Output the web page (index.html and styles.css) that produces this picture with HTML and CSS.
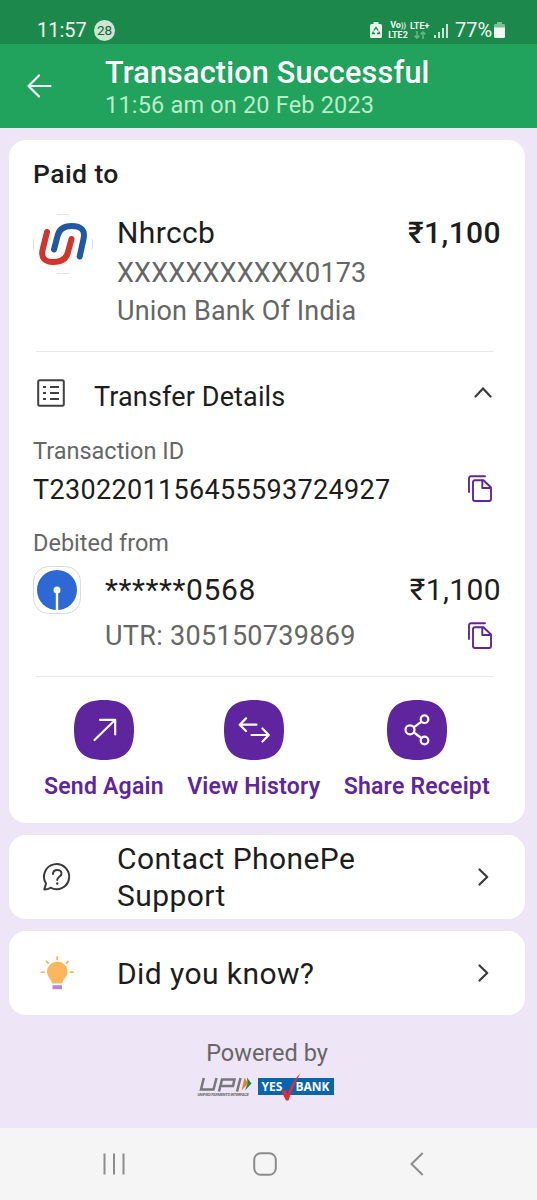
FILE: index.html
```html
<!DOCTYPE html>
<html lang="en">
<head>
<meta charset="utf-8">
<title>Transaction Successful</title>
<link rel="stylesheet" href="styles.css">
</head>
<body>
<div class="screen">
  <div class="status">
    <span class="clock">11:57</span>
    <span class="count">28</span>
    <svg class="status-recycle" width="12" height="16" viewBox="0 0 12 16"><path d="M3.500 0h5v2h2q1.500 0 1.500 1.500v11q0 1.500-1.500 1.500h-9Q0 16 0 14.500v-11Q0 2 1.500 2h2z" fill="#e6f5ea"/><path d="M3.900 8.500 6 5.400l2.100 3.100M8.800 9.500l.8 2H7M5 11.500H2.500l.9-2" fill="none" stroke="#1d884b" stroke-width="1.300"/></svg>
    <div class="volte"><span>Vo<i>))</i></span><span>LTE2</span></div>
    <div class="lte"><span>LTE+</span><svg width="12" height="8" viewBox="0 0 12 8" fill="none" stroke="#68b586" stroke-width="1.500"><path d="M3 0v7M.6 4.600 3 7l2.400-2.400M9 8V1M6.600 3.400 9 1l2.400 2.400"/></svg></div>
    <svg class="signal" width="14" height="15" viewBox="0 0 14 15" stroke="#e6f5ea" stroke-width="1.700"><path d="M1 15v-3M5 15V9M9 15V5M13 15V1"/></svg>
    <span class="percent">77%</span>
    <svg class="battery" width="11" height="16" viewBox="0 0 11 16"><path d="M3 0h5v2h2q1 0 1 1v3H0V3q0-1 1-1h2z" fill="#7cc096"/><path d="M0 5.500h11V14.500q0 1.500-1.500 1.500h-8Q0 16 0 14.500z" fill="#effaf1"/></svg>
  </div>
  <header class="header">
    <svg class="back" width="25" height="24" viewBox="0 0 25 24" fill="none" stroke="#fff" stroke-width="2.200" stroke-linecap="round" stroke-linejoin="round"><path d="M23.500 12H1.500M12 1.500 1.500 12 12 22.500"/></svg>
    <div>
      <h1 class="title">Transaction Successful</h1>
      <p class="subtitle">11:56 am on 20 Feb 2023</p>
    </div>
  </header>
  <main class="content">
    <section class="card receipt">
      <h2 class="paid">Paid to</h2>
      <div class="payee">
        <svg class="union" width="60" height="60" viewBox="0 0 60 60" fill="none" stroke-linecap="round"><path d="M24.500 .5q5.500-.7 11 0M24.500 59.500q5.500.7 11 0M.7 25q-.6 5 0 10M59.300 25q.6 5 0 10" stroke="#dce0e4" stroke-width="1"/><path d="M14 18 9.800 35C7.500 44 12 48 20 48c9 0 13.500-3.500 15-10l3.500-13" stroke="#d2342d" stroke-width="6"/><path d="M21 35.500 24.500 22C26 15.500 31 12 38.500 12c10 0 14 4.500 12 13l-3.800 17.500" stroke="#20599f" stroke-width="6"/></svg>
        <div class="payee-text">
          <p class="name">Nhrccb</p>
          <p class="acct">XXXXXXXXXXX0173</p>
          <p class="bank">Union Bank Of India</p>
        </div>
        <p class="amount strong">₹1,100</p>
      </div>
      <hr class="rule">
      <div class="details">
        <svg width="28" height="28" viewBox="0 0 28 28" fill="none" stroke="#414141" stroke-width="2"><rect x="1.200" y="1.200" width="25.600" height="25.600" rx="1.500"/><path d="M6 8h3M6 14h3M6 20h3M13 8h9M13 14h9M13 20h9"/></svg>
        <p class="details-title">Transfer Details</p>
        <svg class="chevron-up" width="18" height="12" viewBox="0 0 18 12" fill="none" stroke="#3b3b3b" stroke-width="2.200" stroke-linecap="round"><path d="M1.500 9.500 9 1.500l7.500 8"/></svg>
      </div>
      <p class="label">Transaction ID</p>
      <div class="line id-line">
        <p class="txn">T2302201156455593724927</p>
        <svg class="copy" width="25" height="28" viewBox="0 0 25 28"><path d="M2 17V3.300q0-2 2-2H18M8 5.300h8.500L24 12.500V24q0 2-2 2H8q-2 0-2-2V7.300q0-2 2-2zM15.300 5.500V13h8.500"/></svg>
      </div>
      <p class="label debited">Debited from</p>
      <div class="account">
        <svg class="sbi" width="48" height="48" viewBox="0 0 48 48"><rect x=".5" y=".5" width="47" height="47" rx="15" fill="#fff" stroke="#d9d9de"/><circle cx="24" cy="24" r="20" fill="#2e68d4"/><circle cx="24" cy="24" r="3.500" fill="#fff"/><path d="M24 24v21" stroke="#fff" stroke-width="2.400"/></svg>
        <div class="account-text">
          <div class="line"><p class="masked">******0568</p><p class="amount">₹1,100</p></div>
          <div class="line utr-line">
            <p class="utr">UTR: 305150739869</p>
            <svg class="copy" width="25" height="28" viewBox="0 0 25 28"><path d="M2 17V3.300q0-2 2-2H18M8 5.300h8.500L24 12.500V24q0 2-2 2H8q-2 0-2-2V7.300q0-2 2-2zM15.300 5.500V13h8.500"/></svg>
          </div>
        </div>
      </div>
      <hr class="rule">
      <div class="actions">
        <div class="action send">
          <svg width="60" height="60" viewBox="0 0 60 60"><path class="tile" d="M30 0C50 0 60 8 60 30S50 60 30 60 0 52 0 30 10 0 30 0z"/><path class="glyph" d="M20.500 40 41 20M26 19.800h15.200V34.500"/></svg>
          <span>Send Again</span>
        </div>
        <div class="action history">
          <svg width="60" height="60" viewBox="0 0 60 60"><path class="tile" d="M30 0C50 0 60 8 60 30S50 60 30 60 0 52 0 30 10 0 30 0z"/><path class="glyph" d="M32.500 24.700H16M22 18.400 15.700 24.700 22 31M27.500 35H44.500M38.500 28.500l6.300 6.500-6.300 6.500"/></svg>
          <span>View History</span>
        </div>
        <div class="action share">
          <svg width="60" height="60" viewBox="0 0 60 60"><path class="tile" d="M30 0C50 0 60 8 60 30S50 60 30 60 0 52 0 30 10 0 30 0z"/><g class="glyph"><circle cx="23" cy="29.800" r="4.500"/><circle cx="37.500" cy="19.200" r="3.800"/><circle cx="37.500" cy="40.500" r="3.800"/><path d="m27 27.100 7.300-5.300M27 32.500l7.300 5.500"/></g></svg>
          <span>Share Receipt</span>
        </div>
      </div>
    </section>
    <section class="card link">
      <svg class="link-icon" width="34" height="34" viewBox="0 0 34 34" fill="none" stroke="#3b3b3b" stroke-width="2" stroke-linecap="round" stroke-linejoin="round"><path d="M4.300 29.500 6 23.500A12.600 12.600 0 1 1 10.500 27.700C8.500 29.200 6.500 29.500 4.300 29.500z"/><path d="M13 14c0-5.300 8.500-5.300 8.500-.5 0 3.500-4.300 3-4.300 6.500"/><path d="M17.200 23.500v.1" stroke-width="2.400"/></svg>
      <p class="link-text">Contact PhonePe<br>Support</p>
      <svg class="chevron" width="11" height="18" viewBox="0 0 11 18"><path d="m1.500 1.500 7.700 7.500-7.700 7.500"/></svg>
    </section>
    <section class="card link">
      <svg class="link-icon" width="34" height="34" viewBox="0 0 34 34"><path d="M11.800 26.500C11.300 23 7 21 7 15.500a10.300 10 0 0 1 20.600 0C27.600 21 23 23 22.500 26.500q-.2 1-1 1h-8.700q-.8 0-1-1z" fill="#feb65e"/><path d="M17.200 1v2.500M6.500 5.500l1.600 1.600M28 5.500l-1.600 1.600M1.500 16.200H4M30.500 16.200H33" stroke="#f9b566" stroke-width="1.800" stroke-linecap="round"/><path d="M12.500 29.200h9.500v4h-9.500z" fill="#bb86d9"/></svg>
      <p class="link-text">Did you know?</p>
      <svg class="chevron" width="11" height="18" viewBox="0 0 11 18"><path d="m1.500 1.500 7.700 7.500-7.700 7.500"/></svg>
    </section>
    <footer class="powered">
      <p>Powered by</p>
      <div class="brands">
        <div class="upi">
          <svg width="55" height="17" viewBox="0 0 55 17"><g fill="none" stroke="#77777b" stroke-width="2.500"><path d="M5.800 3 3 14.500H15.500L18.500 3M21 16.500 24 4.400H36.500L35 11H23.500M42.500 3 39 16.500"/></g><path d="m46.500 2.500 3.500 6-6.500 7z" fill="#f07d24"/><path d="m49 2.500 4.500 6-6.500 7 2.500-7z" fill="#16894b"/></svg>
          <span>UNIFIED PAYMENTS INTERFACE</span>
        </div>
        <div class="yes"><b>YES</b><b>BANK</b><svg class="tick" width="24" height="29" viewBox="0 0 24 29"><path d="M2.500 18.500 6.500 17l2 4C11.500 13 16 5.500 21.500 0 16.500 9 12.500 17.500 9.500 27.500H7z" fill="#e22b38"/></svg></div>
      </div>
    </footer>
  </main>
  <nav class="nav">
    <svg width="24" height="24" viewBox="0 0 24 24"><path d="M2.500 1.500v21M12 1.500v21M21.500 1.500v21"/></svg>
    <svg class="home" width="24" height="24" viewBox="0 0 24 24"><rect x="1.200" y="1.200" width="21.600" height="21.600" rx="6.500"/></svg>
    <svg width="14" height="24" viewBox="0 0 14 24"><path d="M12.700 1 1.500 12l11.200 11"/></svg>
  </nav>
</div>
</body>
</html>
```
FILE: styles.css
```css
* { box-sizing: border-box; margin: 0; }
body { font-family: Roboto, "Noto Sans", sans-serif; background: #eee5f6; color: #1d1d1d; }
p, h1, h2, span { white-space: nowrap; }
svg { display: block; flex: none; }
.screen { width: 537px; height: 1200px; display: flex; flex-direction: column; overflow: hidden; }
.status { height: 44px; flex: none; background: #1d884b; color: #effaf1; display: flex; align-items: center; padding: 16px 32px 0 37px; }
.clock { font-size: 20px; line-height: 28px; width: 57px; }
.count { width: 21px; height: 21px; border-radius: 50%; background: #c9e7d1; color: #235b39; font-size: 13.5px; line-height: 21px; text-align: center; }
.status-recycle { margin: 0 6px 0 auto; }
.volte, .lte { display: flex; flex-direction: column; align-items: center; font-size: 9px; line-height: 9px; font-weight: 700; width: 20px; }
.volte { margin-right: 2px; }
.volte i { font-style: normal; font-size: 7px; }
.lte { align-items: flex-start; }
.lte svg { margin-left: 4px; }
.signal { margin: 0 7px 0 4px; }
.percent { font-size: 20px; line-height: 28px; width: 39px; }
.header { height: 84px; flex: none; background: #21a25d; color: #fff; display: flex; padding: 11px 0 0 27px; }
.back { margin: 19px 53px 0 0; }
.title { font-size: 30.500px; line-height: 36px; font-weight: 500; letter-spacing: .23px; }
.subtitle { font-size: 23.500px; line-height: 28px; color: #b9ecc8; letter-spacing: .18px; }
.content { flex: 1; padding: 12px 12px 0 9px; display: flex; flex-direction: column; gap: 12px; }
.card { background: #fff; border-radius: 17px; }
.receipt { height: 683px; padding: 18px 25px 0 24px; }
.paid { font-size: 26.500px; line-height: 32px; font-weight: 500; letter-spacing: .42px; }
.payee { display: flex; margin-top: 24px; }
.payee-text { flex: 1; margin-left: 24px; }
.name { font-size: 30px; line-height: 38px; margin-bottom: 2px; letter-spacing: .38px; }
.acct, .bank { font-size: 27px; line-height: 38px; color: #666; letter-spacing: .17px; }
.amount { font-size: 30px; line-height: 38px; letter-spacing: .4px; margin-right: -1px; }
.strong { font-weight: 500; }
.rule { border: 0; height: 1px; background: #e9e9e9; margin: 21px 6px 0 3px; }
.details { display: flex; margin: 27px 8px 0 4px; }
.details-title { font-size: 27px; line-height: 36px; margin-left: 29px; flex: 1; letter-spacing: .14px; }
.chevron-up { margin-top: 8px; }
.label { font-size: 23.500px; line-height: 30px; color: #666; margin-top: 21px; }
.line { display: flex; justify-content: space-between; }
.id-line { margin-top: 6px; padding-right: 8px; }
.txn { font-size: 27px; line-height: 36px; letter-spacing: .33px; }
.copy { margin-top: 3px; fill: none; stroke: #5f259f; stroke-width: 1.900; stroke-linejoin: round; stroke-linecap: round; }
.utr-line .copy { margin-top: 4px; }
.debited { margin-top: 20px; }
.account { display: flex; margin-top: 8px; }
.account-text { flex: 1; margin: 5px 0 0 24px; }
.masked { font-size: 30px; line-height: 38px; letter-spacing: .6px; }
.utr-line { margin-top: 9px; padding-right: 8px; }
.utr { font-size: 27px; line-height: 36px; color: #666; letter-spacing: .3px; }
.account + .rule { margin-top: 22px; }
.actions { display: flex; justify-content: space-between; margin: 23px 10px 0 11px; }
.action { display: flex; flex-direction: column; align-items: center; gap: 13px; color: #5f259f; font-size: 23px; line-height: 28px; font-weight: 600; letter-spacing: .22px; }
.tile { fill: #5f259f; }
.glyph { fill: none; stroke: #fff; stroke-width: 2.200; stroke-linecap: round; stroke-linejoin: round; }
.link { height: 84px; display: flex; align-items: center; padding: 0 36px 0 31px; }
.link-text { flex: 1; margin-left: 43px; font-size: 30px; line-height: 37px; letter-spacing: .42px; }
.chevron { fill: none; stroke: #3b3b3b; stroke-width: 2.200; stroke-linecap: round; stroke-linejoin: round; }
.powered { display: flex; flex-direction: column; align-items: center; padding-top: 11px; color: #666; font-size: 23.500px; line-height: 30px; }
.brands { display: flex; gap: 5px; margin: 7px 3px 0 0; }
.upi { width: 55px; }
.upi span { display: block; font-size: 4px; line-height: 5px; font-weight: 700; font-style: italic; letter-spacing: -.2px; }
.yes { position: relative; width: 76px; height: 17px; margin-top: 3px; background: #0964ae; color: #fff; display: flex; justify-content: space-between; padding: 0 4px; font-family: "Open Sans", sans-serif; font-size: 12px; line-height: 18px; }
.tick { position: absolute; left: 21px; top: -5px; }
.nav { height: 72px; background: #f5f5f5; display: flex; justify-content: space-between; align-items: center; padding: 0 113px 0 102px; fill: none; stroke: #8c8c8c; stroke-width: 2; }
.home { margin-right: 6px; }
```
